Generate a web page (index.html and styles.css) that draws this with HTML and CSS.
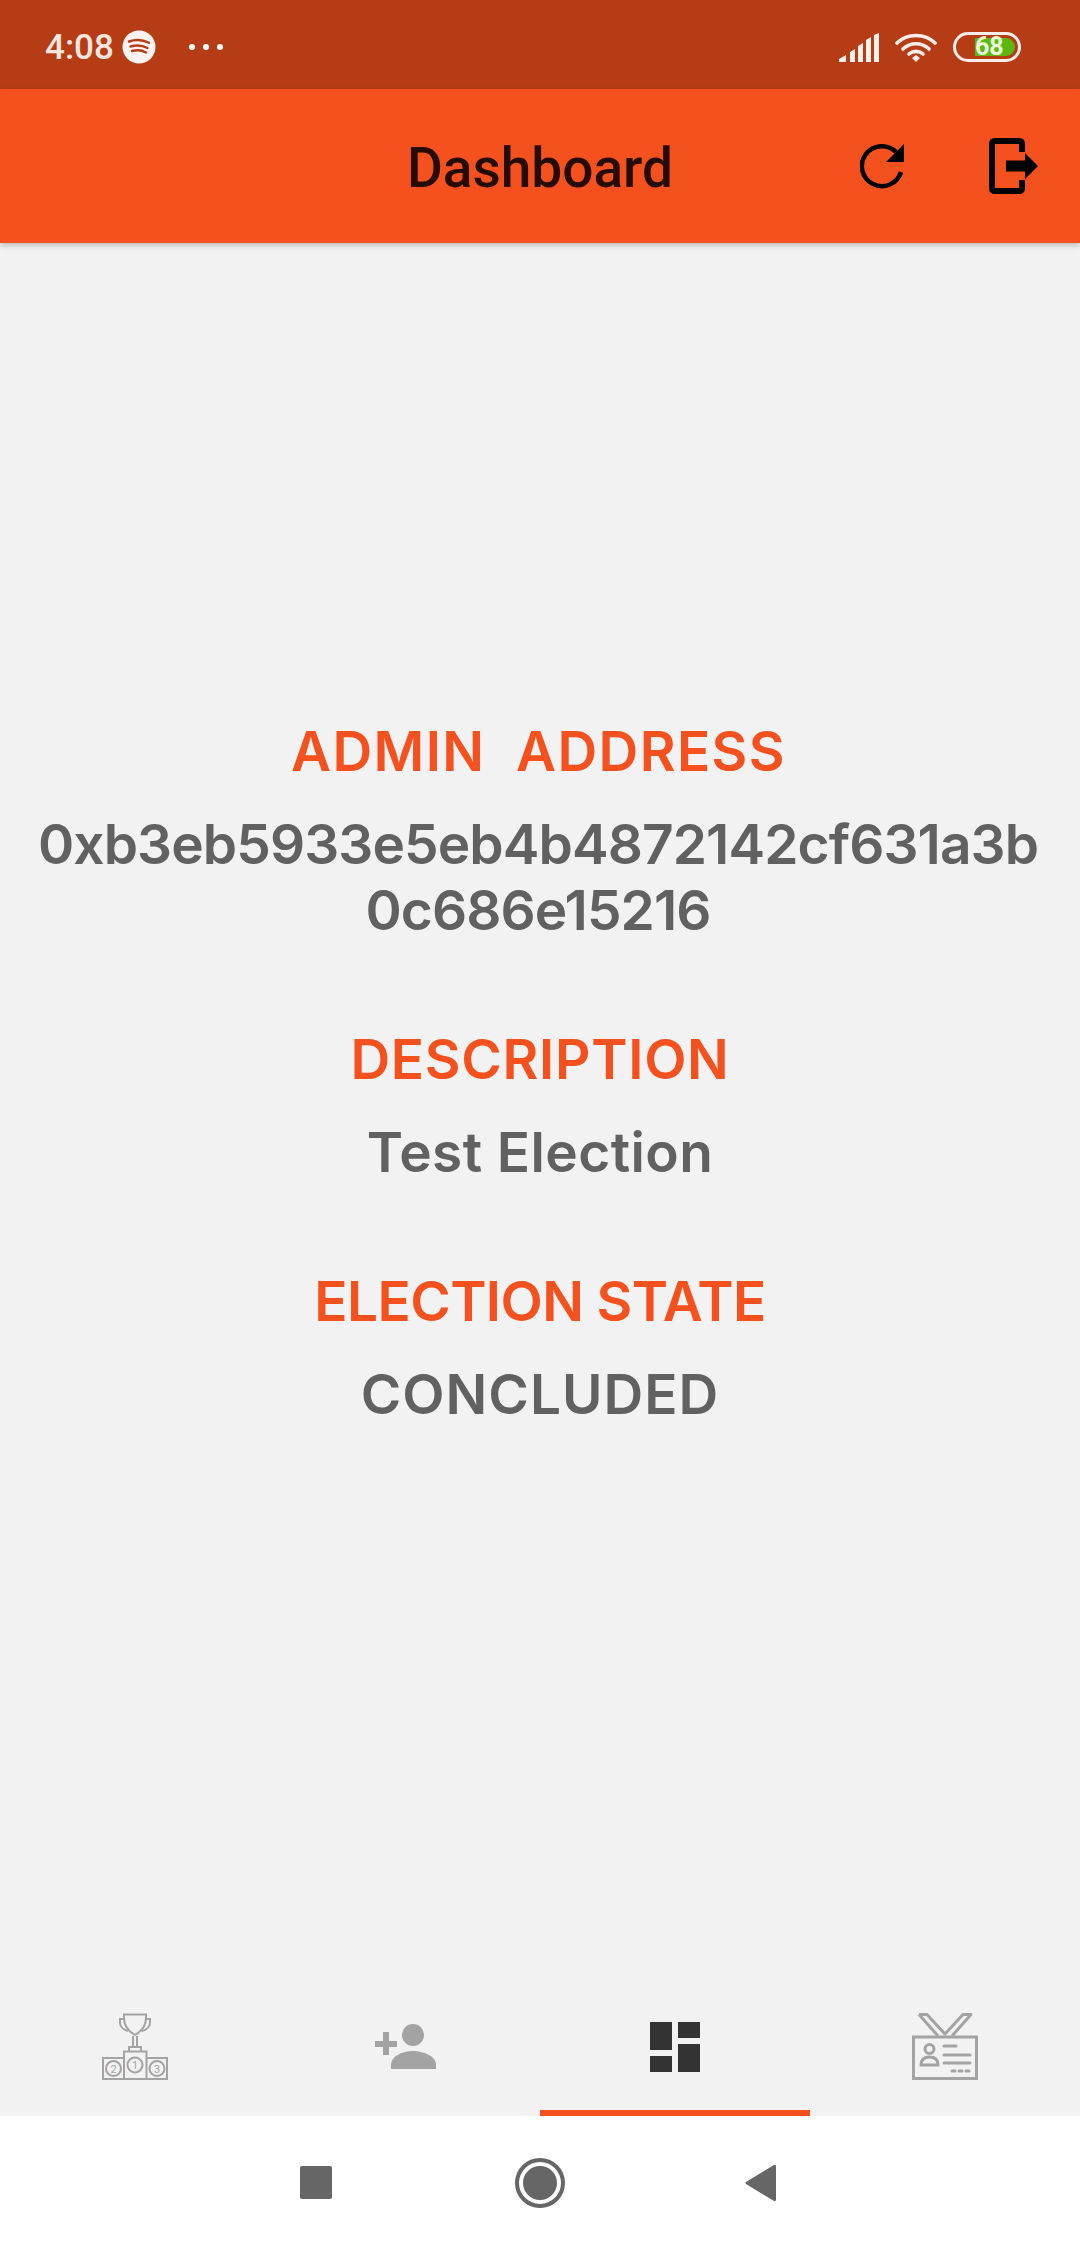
FILE: index.html
```html
<!DOCTYPE html>
<html lang="en">

<head>
    <meta charset="UTF-8">
    <meta name="viewport" content="width=device-width, initial-scale=1.0">
    <title>Dashboard</title>
    <link rel="stylesheet" href="styles.css">
</head>

<body>
    <div class="status-bar">
        <div class="status-left">
            <span class="clock">4:08</span>
            <svg class="spotify" width="34" height="34" viewBox="0 0 34 34">
                <circle cx="17" cy="17" r="16.5" fill="#fdf3f0" />
                <path d="M7 11.5C13 9.5 21 9.8 27 12.8M8.5 16.5C13.5 15 20.5 15.3 25.5 18M10 21C14 20 20 20.2 24 22.5"
                    fill="none" stroke="#b53c14" stroke-width="2.4" stroke-linecap="round" />
            </svg>
            <div class="dots"><i></i><i></i><i></i></div>
        </div>
        <div class="status-right">
            <svg width="40" height="29" viewBox="0 0 40 29" fill="#fdeee9">
                <path d="M0 29V26L7 22V29ZM11 29V19L16 16V29ZM19 29V13L24 10V29ZM27 29V7L32 4V29ZM35 29V2L40 0V29Z" />
            </svg>
            <svg class="wifi" width="42" height="30" viewBox="0 0 42 30">
                <g fill="none" stroke="#fdeee9" stroke-width="3.6" stroke-linecap="round">
                    <path d="M2 11C12 1 30 1 40 11" />
                    <path d="M8 17C15 10 27 10 34 17" />
                    <path d="M14 22C18 18.5 24 18.5 28 22" />
                </g>
                <path d="M17 26L21 23L25 26L21 30Z" fill="#fdeee9" />
            </svg>
            <div class="battery">
                <div class="battery-level">68</div>
            </div>
        </div>
    </div>

    <header class="app-bar">
        <h1>Dashboard</h1>
        <svg class="reload" width="46" height="46" viewBox="0 0 46 46">
            <path d="M41 29A20 20 0 1 1 36 9" fill="none" stroke="#000" stroke-width="4.5" />
            <path d="M44 1V19H26Z" fill="#000" />
        </svg>
        <svg class="logout" width="49" height="56" viewBox="0 0 49 56">
            <path d="M33 14V6Q33 3 30 3H6Q3 3 3 6V50Q3 53 6 53H30Q33 53 33 50V42" fill="none" stroke="#000" stroke-width="6" />
            <path d="M17 22.5H36V15L49 28L36 41V33.5H17Z" fill="#000" />
        </svg>
    </header>

    <main class="content">
        <h2 class="label label-admin">ADMIN&nbsp; ADDRESS</h2>
        <p class="value value-address">0xb3eb5933e5eb4b4872142cf631a3b<br>0c686e15216</p>
        <h2 class="label label-description">DESCRIPTION</h2>
        <p class="value value-description">Test Election</p>
        <h2 class="label label-state">ELECTION STATE</h2>
        <p class="value value-state">CONCLUDED</p>
    </main>

    <nav class="tabs">
        <div class="tab">
            <svg width="66" height="67" viewBox="0 0 66 67" fill="none" stroke="#a3a3a3" stroke-width="2">
                <path d="M22 1.5H44V5C44 12 40 18 33 22C26 18 22 12 22 5Z" />
                <path d="M22 6H18V10C18 14 22 17 26 18M44 6H48V10C48 14 44 17 40 18" />
                <path d="M31 23V33M35 23V33M27 38V34H39V38" />
                <path d="M1 45H22V66H1ZM22 38.5H44.5V66H22ZM44.5 45H65V66H44.5Z" />
                <circle cx="11.5" cy="55.5" r="7.5" />
                <circle cx="33" cy="52" r="7.5" />
                <circle cx="55" cy="55.5" r="7.5" />
                <g class="podium-digits">
                    <text x="11.5" y="59.5">2</text>
                    <text x="33" y="56">1</text>
                    <text x="55" y="59.5">3</text>
                </g>
            </svg>
        </div>
        <div class="tab">
            <svg width="61" height="45" viewBox="0 0 61 45" fill="#a3a3a3">
                <circle cx="38" cy="11" r="11" />
                <path d="M16 45V41C16 32 28 27 38 27C48 27 61 32 61 41V45Z" />
                <path d="M8 8H14V17H22V23H14V31H8V23H0V17H8Z" />
            </svg>
        </div>
        <div class="tab tab-active">
            <div class="dash-grid">
                <div class="dash-col">
                    <i class="dash-tall"></i>
                    <i class="dash-short"></i>
                </div>
                <div class="dash-col">
                    <i class="dash-short"></i>
                    <i class="dash-tall"></i>
                </div>
            </div>
        </div>
        <div class="tab">
            <svg width="66" height="67" viewBox="0 0 66 67" fill="none" stroke="#a3a3a3" stroke-width="3">
                <path d="M7 1.5H15L33 21L51 1.5H59L40 23M7 1.5L26 23" stroke-linejoin="round" />
                <path d="M1.5 24H64.5V65.5H1.5Z" />
                <circle cx="17.5" cy="36" r="4.5" />
                <path d="M9 52C9 46 13 44 17.5 44C22 44 26 46 26 52Z" />
                <path d="M32 33H44M32 42H58M32 50H58" stroke-linecap="round" />
                <path d="M40 58H43M47 58H50M54 58H57" stroke-linecap="round" />
            </svg>
        </div>
    </nav>

    <footer class="nav-bar">
        <div class="nav-square"></div>
        <div class="nav-home"><i></i></div>
        <svg width="32" height="38" viewBox="0 0 32 38">
            <path d="M1 18L29 1Q31 0 31 3V35Q31 38 29 37L1 20Q0 19 1 18Z" fill="#666" />
        </svg>
    </footer>
</body>

</html>
```

FILE: styles.css
```css
html, body {
    margin: 0;
    padding: 0;
}

body {
    width: 1080px;
    height: 2246px;
    display: flex;
    flex-direction: column;
    background-color: #f2f2f2;
    font-family: Roboto, sans-serif;
    overflow: hidden;
}

.status-bar {
    height: 89px;
    box-sizing: border-box;
    background-color: #b53c14;
    display: flex;
    align-items: center;
    justify-content: space-between;
    padding: 5px 59px 0 45px;
    flex-shrink: 0;
}

.status-left,
.status-right {
    display: flex;
    align-items: center;
}

.status-right {
    gap: 16px;
}

.clock {
    color: #fbe6df;
    font-size: 35px;
    font-weight: 500;
}

.spotify {
    margin-left: 8px;
}

.dots {
    display: flex;
    gap: 8px;
    margin-left: 33px;
}

.dots i {
    width: 6px;
    height: 6px;
    border-radius: 50%;
    background-color: #fff;
}

.battery {
    width: 68px;
    height: 30px;
    box-sizing: border-box;
    border: 3px solid #fdeee9;
    border-radius: 15px;
    padding: 3px 3px 3px 19px;
}

.battery-level {
    height: 18px;
    background-color: #5cb811;
    border-radius: 0 9px 9px 0;
    color: #eafbd9;
    font-size: 25px;
    font-weight: 700;
    line-height: 18px;
}

.app-bar {
    position: relative;
    height: 154px;
    background-color: #f4511e;
    box-shadow: 0 2px 6px rgba(0, 0, 0, 0.25);
    display: flex;
    align-items: center;
    flex-shrink: 0;
    padding-left: 860px;
}

.app-bar h1 {
    position: absolute;
    left: 0;
    right: 0;
    margin: 0;
    padding-top: 3px;
    text-align: center;
    font-size: 55px;
    font-weight: 500;
    color: #260c00;
}

.logout {
    margin-left: 83px;
}

.content {
    flex: 1;
    display: flex;
    flex-direction: column;
    align-items: center;
    padding-top: 475px;
    font-family: Inter, sans-serif;
}

.label {
    margin: 0;
    font-size: 55px;
    font-weight: 600;
    line-height: 66px;
    color: #f4511e;
    text-align: center;
}

.label-admin {
    letter-spacing: 1.4px;
    padding-right: 3px;
}

.label-description {
    letter-spacing: 0.7px;
}

.label-state {
    letter-spacing: -0.6px;
}

.value {
    margin: 27px 0 83px;
    font-size: 55px;
    font-weight: 600;
    line-height: 66px;
    color: #616161;
    text-align: center;
}

.value-address {
    padding-right: 4px;
    letter-spacing: -0.9px;
}

.value-description {
    letter-spacing: 0.4px;
}

.value-state {
    letter-spacing: 1px;
}

.tabs {
    height: 136px;
    display: flex;
    flex-shrink: 0;
}

.tab {
    width: 270px;
    box-sizing: border-box;
    padding-top: 3px;
    border-bottom: 6px solid transparent;
    display: flex;
    align-items: center;
    justify-content: center;
}

.tab-active {
    border-bottom-color: #f4511e;
}

.podium-digits text {
    fill: #a3a3a3;
    stroke: none;
    font-family: Roboto, sans-serif;
    font-size: 11px;
    text-anchor: middle;
}

.dash-grid {
    display: flex;
    gap: 6px;
}

.dash-col {
    width: 22px;
    display: flex;
    flex-direction: column;
    gap: 6px;
}

.dash-col i {
    display: block;
    background-color: #333;
}

.dash-tall {
    height: 28px;
}

.dash-short {
    height: 16px;
}

.nav-bar {
    height: 130px;
    box-sizing: border-box;
    padding: 3px 3px 0 0;
    background-color: #fff;
    display: flex;
    align-items: center;
    justify-content: center;
    gap: 180px;
    flex-shrink: 0;
}

.nav-square {
    width: 32px;
    height: 33px;
    margin-right: 3px;
    border-radius: 2px;
    background-color: #666;
}

.nav-home {
    width: 50px;
    height: 50px;
    box-sizing: border-box;
    border: 4px solid #666;
    border-radius: 50%;
    padding: 4px;
}

.nav-home i {
    display: block;
    width: 34px;
    height: 34px;
    border-radius: 50%;
    background-color: #666;
}
```
